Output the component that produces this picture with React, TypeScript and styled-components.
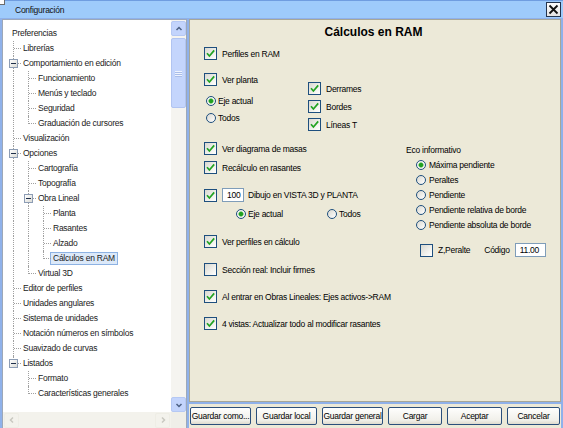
import React from 'react'
import styled, { createGlobalStyle } from 'styled-components'

const GlobalStyle = createGlobalStyle`
  html, body {
    margin: 0;
    padding: 0;
    background: #8fb1ea;
  }
  body {
    font-family: "Liberation Sans", Arial, sans-serif;
    font-size: 8.5px;
    letter-spacing: -0.25px;
    color: #000;
  }
`

const Window = styled.div`
  width: 563px;
  height: 428px;
  display: flex;
  flex-direction: column;
  background: #8fb1ea;
  overflow: hidden;
`

const TitleBar = styled.div`
  flex: none;
  height: 17px;
  border-top: 1px solid #6f9de0;
  background: #9ecbfb;
  display: flex;
  align-items: center;
  padding-right: 2px;
`

const TitleIcon = styled.div`
  align-self: flex-start;
  margin-top: -1px;
  width: 4px;
  height: 4px;
  background: #fdfdfd;
  border-right: 1px solid #6b6b6b;
  border-bottom: 1px solid #6b6b6b;
`

const TitleText = styled.span`
  flex: 1;
  margin-left: 10px;
  color: #111;
`

const CloseButton = styled.button`
  width: 15px;
  height: 15px;
  padding: 0;
  border: 1px solid #23344e;
  background: linear-gradient(#fdfdfd, #e4e4e4);
  display: flex;
  align-items: center;
  justify-content: center;
`

const Main = styled.div`
  flex: 1;
  min-height: 0;
  display: flex;
  gap: 2px;
  padding: 1px 2px 0 2px;
`

/* ---------- tree pane ---------- */

const TreePane = styled.div`
  flex: none;
  width: 185px;
  box-sizing: border-box;
  border: 1px solid #9da8b8;
  border-bottom: none;
  background: #fff;
  display: grid;
  grid-template-columns: 1fr 15px;
  grid-template-rows: 1fr 16px;
  overflow: hidden;
`

const Tree = styled.div`
  padding: 6px 0 0 2px;
  overflow: hidden;
  min-height: 0;
`

const TreeRow = styled.div`
  height: 15px;
  display: flex;
  align-items: center;
  white-space: nowrap;
`

type CellKind = 'line' | 'tee' | 'elbow' | 'blank'

const Cell = styled.span<{ $kind: CellKind }>`
  position: relative;
  flex: none;
  width: 15px;
  height: 15px;
  &::before {
    content: '';
    position: absolute;
    left: 8px;
    top: 0;
    height: ${p => (p.$kind === 'elbow' ? '8px' : '15px')};
    border-left: 1px dotted #a0a0a0;
    display: ${p => (p.$kind === 'blank' ? 'none' : 'block')};
  }
  &::after {
    content: '';
    position: absolute;
    left: 9px;
    top: 7px;
    width: 7px;
    border-top: 1px dotted #a0a0a0;
    display: ${p => (p.$kind === 'tee' || p.$kind === 'elbow' ? 'block' : 'none')};
  }
`

const Expander = styled.span`
  position: absolute;
  z-index: 1;
  left: 4px;
  top: 3px;
  width: 9px;
  height: 9px;
  box-sizing: border-box;
  border: 1px solid #8d9db5;
  background: linear-gradient(135deg, #ffffff, #dcdcd6);
  &::after {
    content: '';
    position: absolute;
    left: 1px;
    top: 3px;
    width: 5px;
    height: 1px;
    background: #1f2f4a;
  }
`

const NodeLabel = styled.span<{ $selected?: boolean; $root?: boolean }>`
  margin-left: ${p => (p.$root ? '4px' : '0')};
  padding: 0 2px;
  line-height: 11px;
  border: 1px solid ${p => (p.$selected ? '#8db2e3' : 'transparent')};
  background: ${p => (p.$selected ? '#dce9f9' : 'transparent')};
  color: #1b1b1b;
`

const VScroll = styled.div`
  grid-row: 1;
  grid-column: 2;
  display: flex;
  flex-direction: column;
  background: #f5f4f0;
  padding-top: 1px;
`

const ScrollButton = styled.div<{ $disabled?: boolean }>`
  flex: none;
  width: 15px;
  height: 15px;
  box-sizing: border-box;
  border: 1px solid ${p => (p.$disabled ? '#eeede5' : '#b5c8f4')};
  border-radius: 2px;
  background: ${p => (p.$disabled ? '#f3f2ec' : '#c3d4fc')};
  display: flex;
  align-items: center;
  justify-content: center;
`

const Thumb = styled.div`
  flex: none;
  margin-top: 2px;
  height: 70px;
  box-sizing: border-box;
  border: 1px solid #b1c4f1;
  border-radius: 2px;
  background: #c4d5fc;
  display: flex;
  flex-direction: column;
  align-items: center;
  justify-content: center;
  gap: 1px;
`

const Grip = styled.span`
  width: 7px;
  height: 1px;
  background: #eef3fe;
  box-shadow: 0 1px 0 #a9bde9;
`

const Track = styled.div`
  flex: 1;
`

const HScroll = styled.div`
  grid-row: 2;
  grid-column: 1;
  background: #f3f2ec;
  display: flex;
  justify-content: space-between;
  align-items: center;
  padding: 0 1px;
`

const Corner = styled.div`
  grid-row: 2;
  grid-column: 2;
  background: #efeee8;
`

/* ---------- right side ---------- */

const RightColumn = styled.div`
  flex: 1;
  min-width: 0;
  display: flex;
  flex-direction: column;
  gap: 2px;
`

const Panel = styled.div`
  flex: 1;
  min-height: 0;
  box-sizing: border-box;
  background: #ece9d8;
  border: 1px solid #a8a797;
`

const PanelTitle = styled.div`
  padding: 5px 3px 0 0;
  line-height: 14px;
  text-align: center;
  font-size: 12px;
  font-weight: bold;
  letter-spacing: 0;
`

const PanelBody = styled.div`
  padding-left: 14px;
`

const CheckRow = styled.div<{ $mt?: number; $indent?: number }>`
  display: flex;
  align-items: center;
  height: 13px;
  gap: 5px;
  margin-top: ${p => p.$mt ?? 0}px;
  padding-left: ${p => p.$indent ?? 0}px;
  white-space: nowrap;
`

const Box = styled.span`
  flex: none;
  width: 13px;
  height: 13px;
  box-sizing: border-box;
  border: 1px solid #1e4f7e;
  background: linear-gradient(135deg, #d9d8d0 0%, #f3f3ef 65%, #ffffff 100%);
  display: flex;
  align-items: center;
  justify-content: center;
`

const RadioRow = styled.div<{ $mt?: number; $indent?: number; $height?: number; $width?: number }>`
  display: flex;
  align-items: center;
  gap: 2px;
  height: ${p => p.$height ?? 10}px;
  margin-top: ${p => p.$mt ?? 0}px;
  padding-left: ${p => p.$indent ?? 0}px;
  width: ${p => (p.$width ? `${p.$width}px` : 'auto')};
  flex: none;
  white-space: nowrap;
`

const RadioCircle = styled.span<{ $checked?: boolean }>`
  flex: none;
  width: 10px;
  height: 10px;
  box-sizing: border-box;
  border-radius: 50%;
  border: 1px solid #1e4f7e;
  background: ${p =>
    p.$checked
      ? 'radial-gradient(circle, #21a021 0 1.8px, #7fd07f 2.4px, #f4f4f0 3px)'
      : 'linear-gradient(135deg, #d9d8d0, #ffffff)'};
`

const PlantaBlock = styled.div`
  display: flex;
  margin-top: 13px;
`

const SubColumn = styled.div<{ $width?: number; $mt?: number; $gap?: number }>`
  display: flex;
  flex-direction: column;
  gap: ${p => p.$gap ?? 0}px;
  width: ${p => (p.$width ? `${p.$width}px` : 'auto')};
  margin-top: ${p => p.$mt ?? 0}px;
  flex: none;
`

const LowerBlock = styled.div`
  display: grid;
  grid-template-columns: 202px auto;
  margin-top: 11px;
`

const InlineRow = styled.div<{ $mt?: number; $indent?: number }>`
  display: flex;
  align-items: center;
  margin-top: ${p => p.$mt ?? 0}px;
  padding-left: ${p => p.$indent ?? 0}px;
  white-space: nowrap;
`

const GroupLabel = styled.div`
  margin-top: 3px;
  line-height: 10px;
`

const Field = styled.input<{ $w: number }>`
  width: ${p => p.$w}px;
  height: 14px;
  box-sizing: border-box;
  border: 1px solid #7f9db9;
  background: #fff;
  padding: 0 0 0 4px;
  margin: 0;
  font: inherit;
  letter-spacing: inherit;
  color: #000;
  outline: none;
`

const ButtonBar = styled.div`
  flex: none;
  height: 24px;
  box-sizing: border-box;
  background: #ece9d8;
  display: flex;
  gap: 5px;
  padding: 3px 0 0 1px;
`

const Button = styled.button<{ $w: number }>`
  width: ${p => p.$w}px;
  height: 18px;
  padding: 0;
  border: 1px solid #2b4f7b;
  border-radius: 2px;
  background: linear-gradient(#fefefd, #f1f0ea 75%, #dedbce);
  font: inherit;
  letter-spacing: inherit;
  color: #000;
`

/* ---------- small pieces ---------- */

const CheckMark = () => (
  <svg width="11" height="11" viewBox="0 0 11 11">
    <path d="M2 5.2 L4.4 8 L9.2 2.4" fill="none" stroke="#22a322" strokeWidth="1.7" />
  </svg>
)

const Check = ({ checked, label, mt, indent }: { checked?: boolean; label: string; mt?: number; indent?: number }) => (
  <CheckRow $mt={mt} $indent={indent}>
    <Box>{checked && <CheckMark />}</Box>
    <span>{label}</span>
  </CheckRow>
)

const Radio = ({ checked, label, mt, indent, height, width, gap }: { checked?: boolean; label: string; mt?: number; indent?: number; height?: number; width?: number; gap?: number }) => (
  <RadioRow $mt={mt} $indent={indent} $height={height} $width={width} style={gap ? { gap } : undefined}>
    <RadioCircle $checked={checked} />
    <span>{label}</span>
  </RadioRow>
)

const Chevron = ({ dir, color }: { dir: 'up' | 'down' | 'left' | 'right'; color: string }) => {
  const d = {
    up: 'M1.5 5 L4 2.5 L6.5 5',
    down: 'M1.5 3 L4 5.5 L6.5 3',
    left: 'M5 1.5 L2.5 4 L5 6.5',
    right: 'M3 1.5 L5.5 4 L3 6.5',
  }[dir]
  return (
    <svg width="8" height="8" viewBox="0 0 8 8">
      <path d={d} fill="none" stroke={color} strokeWidth="1.5" />
    </svg>
  )
}

type TreeNode = { label: string; cells: CellKind[]; open?: boolean; selected?: boolean }

const treeNodes: TreeNode[] = [
  { label: 'Librerías', cells: ['tee'] },
  { label: 'Comportamiento en edición', cells: ['tee'], open: true },
  { label: 'Funcionamiento', cells: ['line', 'tee'] },
  { label: 'Menús y teclado', cells: ['line', 'tee'] },
  { label: 'Seguridad', cells: ['line', 'tee'] },
  { label: 'Graduación de cursores', cells: ['line', 'elbow'] },
  { label: 'Visualización', cells: ['tee'] },
  { label: 'Opciones', cells: ['tee'], open: true },
  { label: 'Cartografía', cells: ['line', 'tee'] },
  { label: 'Topografía', cells: ['line', 'tee'] },
  { label: 'Obra Lineal', cells: ['line', 'tee'], open: true },
  { label: 'Planta', cells: ['line', 'line', 'tee'] },
  { label: 'Rasantes', cells: ['line', 'line', 'tee'] },
  { label: 'Alzado', cells: ['line', 'line', 'tee'] },
  { label: 'Cálculos en RAM', cells: ['line', 'line', 'elbow'], selected: true },
  { label: 'Virtual 3D', cells: ['line', 'elbow'] },
  { label: 'Editor de perfiles', cells: ['tee'] },
  { label: 'Unidades angulares', cells: ['tee'] },
  { label: 'Sistema de unidades', cells: ['tee'] },
  { label: 'Notación números en símbolos', cells: ['tee'] },
  { label: 'Suavizado de curvas', cells: ['tee'] },
  { label: 'Listados', cells: ['elbow'], open: true },
  { label: 'Formato', cells: ['blank', 'tee'] },
  { label: 'Características generales', cells: ['blank', 'elbow'] },
]

const ecoOptions = [
  'Máxima pendiente',
  'Peraltes',
  'Pendiente',
  'Pendiente relativa de borde',
  'Pendiente absoluta de borde',
]

const buttons: Array<[string, number]> = [
  ['Guardar como...', 61],
  ['Guardar local', 61],
  ['Guardar general', 61],
  ['Cargar', 54],
  ['Aceptar', 55],
  ['Cancelar', 53],
]

export default function App() {
  return (
    <>
      <GlobalStyle />
      <Window>
        <TitleBar>
          <TitleIcon />
          <TitleText>Configuración</TitleText>
          <CloseButton>
            <svg width="11" height="11" viewBox="0 0 11 11">
              <path d="M1.5 1.5 L9.5 9.5 M9.5 1.5 L1.5 9.5" stroke="#111" strokeWidth="1.8" />
            </svg>
          </CloseButton>
        </TitleBar>

        <Main>
          <TreePane>
            <Tree>
              <TreeRow>
                <NodeLabel $root>Preferencias</NodeLabel>
              </TreeRow>
              {treeNodes.map(node => (
                <TreeRow key={node.label}>
                  {node.cells.map((kind, i) => (
                    <Cell key={i} $kind={kind}>
                      {node.open && i === node.cells.length - 1 && <Expander />}
                    </Cell>
                  ))}
                  <NodeLabel $selected={node.selected}>{node.label}</NodeLabel>
                </TreeRow>
              ))}
            </Tree>
            <VScroll>
              <ScrollButton>
                <Chevron dir="up" color="#4d6185" />
              </ScrollButton>
              <Thumb>
                <Grip />
                <Grip />
                <Grip />
              </Thumb>
              <Track />
              <ScrollButton>
                <Chevron dir="down" color="#4d6185" />
              </ScrollButton>
            </VScroll>
            <HScroll>
              <ScrollButton $disabled>
                <Chevron dir="left" color="#c9c8c0" />
              </ScrollButton>
              <ScrollButton $disabled>
                <Chevron dir="right" color="#c9c8c0" />
              </ScrollButton>
            </HScroll>
            <Corner />
          </TreePane>

          <RightColumn>
            <Panel>
              <PanelTitle>Cálculos en RAM</PanelTitle>
              <PanelBody>
                <Check checked label="Perfiles en RAM" mt={8} />

                <PlantaBlock>
                  <SubColumn $width={104}>
                    <Check checked label="Ver planta" />
                    <Radio checked label="Eje actual" mt={10} indent={2} />
                    <Radio label="Todos" mt={7} indent={2} />
                  </SubColumn>
                  <SubColumn $mt={9} $gap={5}>
                    <Check checked label="Derrames" />
                    <Check checked label="Bordes" />
                    <Check checked label="Líneas T" />
                  </SubColumn>
                </PlantaBlock>

                <LowerBlock>
                  <SubColumn>
                    <Check checked label="Ver diagrama de masas" />
                    <Check checked label="Recálculo en rasantes" mt={6} />
                    <InlineRow $mt={14}>
                      <Box>
                        <CheckMark />
                      </Box>
                      <Field $w={22} readOnly defaultValue="100" style={{ marginLeft: 5 }} />
                      <span style={{ marginLeft: 4 }}>Dibujo en VISTA 3D y PLANTA</span>
                    </InlineRow>
                    <InlineRow $mt={7} $indent={32}>
                      <Radio checked label="Eje actual" width={91} />
                      <Radio label="Todos" />
                    </InlineRow>
                    <Check checked label="Ver perfiles en cálculo" mt={16} />
                    <Check label="Sección real: Incluir firmes" mt={15} />
                    <Check checked label="Al entrar en Obras Lineales: Ejes activos->RAM" mt={14} />
                    <Check checked label="4 vistas: Actualizar todo al modificar rasantes" mt={14} />
                  </SubColumn>

                  <SubColumn>
                    <GroupLabel>Eco informativo</GroupLabel>
                    <SubColumn $mt={2}>
                      {ecoOptions.map((o, i) => (
                        <Radio key={o} checked={i === 0} label={o} height={15} indent={10} gap={3} />
                      ))}
                    </SubColumn>
                    <InlineRow $mt={11} $indent={14}>
                      <Box />
                      <span style={{ marginLeft: 5 }}>Z,Peralte</span>
                      <span style={{ marginLeft: 14 }}>Código</span>
                      <Field $w={31} readOnly defaultValue="11.00" style={{ marginLeft: 5 }} />
                    </InlineRow>
                  </SubColumn>
                </LowerBlock>
              </PanelBody>
            </Panel>

            <ButtonBar>
              {buttons.map(([text, w]) => (
                <Button key={text} $w={w}>
                  {text}
                </Button>
              ))}
            </ButtonBar>
          </RightColumn>
        </Main>
      </Window>
    </>
  )
}
